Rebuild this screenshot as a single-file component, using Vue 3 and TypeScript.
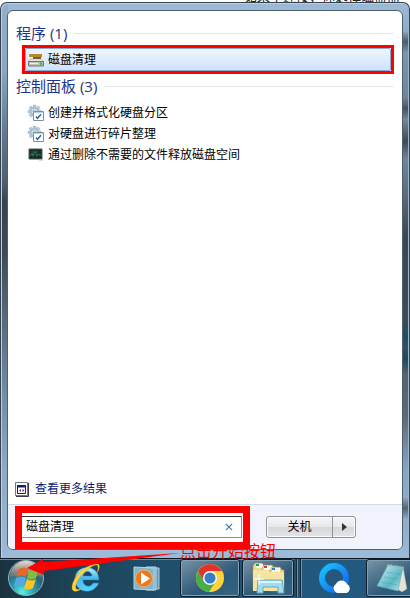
<script setup lang="ts">
import { ref } from 'vue'

type IconName = 'disk' | 'gear' | 'defrag'
interface Result { label: string; icon: IconName; selected?: boolean }
interface Group { title: string; results: Result[] }

const query = ref('磁盘清理')
const groups: Group[] = [
  { title: '程序', results: [{ label: '磁盘清理', icon: 'disk', selected: true }] },
  {
    title: '控制面板',
    results: [
      { label: '创建并格式化硬盘分区', icon: 'gear' },
      { label: '对硬盘进行碎片整理', icon: 'gear' },
      { label: '通过删除不需要的文件释放磁盘空间', icon: 'defrag' },
    ],
  },
]
const teeth = [0, 45, 90, 135, 180, 225, 270, 315]
</script>

<template>
  <main class="desktop">
    <p class="behind">如果不连接，你选择磁盘器</p>
    <section class="start-menu">
      <div class="panel">
        <div class="results">
          <section v-for="group in groups" :key="group.title" class="group">
            <h2>{{ group.title }} ({{ group.results.length }})</h2>
            <ul>
              <li v-for="item in group.results" :key="item.label">
                <button class="result" :class="{ selected: item.selected }" type="button">
                  <svg v-if="item.icon === 'disk'" class="icon" viewBox="0 0 16 16" aria-hidden="true">
                    <path d="M1 2h13v3H1z" fill="#c39a2c" />
                    <path d="M3 2v3M5 2v3M7 2v3M9 2v3M11 2v3M13 2v3" stroke="#8a6a1c" stroke-width=".6" />
                    <path d="M5 5h8v2H5z" fill="#6d5a2a" />
                    <path d="M2 7h11l3 3H0z" fill="#e6e6de" stroke="#a5a59c" stroke-width=".5" />
                    <path d="M.5 9.500h15v4.500H.5z" fill="#c0c0b8" stroke="#75756f" />
                    <path d="M2 11.500h8" stroke="#f0f0ea" />
                    <path d="M12 10.500h2v3h-2z" fill="#32cb38" />
                  </svg>
                  <svg v-else-if="item.icon === 'gear'" class="icon" viewBox="0 0 16 16" aria-hidden="true">
                    <g fill="#b4c8d8" stroke="#8ba6bc" stroke-width=".3">
                      <rect v-for="angle in teeth" :key="angle" x="5" y="0" width="3" height="4" :transform="`rotate(${angle} 6.500 6.500)`" />
                    </g>
                    <circle cx="6.500" cy="6.500" r="3.800" fill="#dce8f2" stroke="#a8bfd1" stroke-width="2" />
                    <circle cx="6.500" cy="6.500" r="1.500" fill="#fff" stroke="#7795ae" stroke-width=".7" />
                    <path d="M5.500 6.500h10v9h-10z" fill="#fff" stroke="#7d929f" />
                    <path d="M6 7.500h9" stroke="#c3ced6" />
                    <path d="M8 11.500l1.500 1.800 3.500-4" fill="none" stroke="#1768ad" stroke-width="1.400" />
                  </svg>
                  <svg v-else class="icon" viewBox="0 0 16 16" aria-hidden="true">
                    <path d="M1 2h13v10H1z" fill="#142a26" stroke="#4c5653" />
                    <path d="M2 5h11M2 8h11M5 3v8M9 3v8" stroke="#315448" stroke-width=".5" />
                    <path d="M2 9l2-3 1 3 2-5 2 5 2-2 2 2" fill="none" stroke="#267946" />
                    <path d="M11 13h4" stroke="#bbb" />
                  </svg>
                  <span>{{ item.label }}</span>
                </button>
              </li>
            </ul>
          </section>
          <a class="more" href="#results">
            <svg class="more-icon" viewBox="0 0 15 15" aria-hidden="true">
              <path d="M.5.5h12v13H.5z" fill="#fff" stroke="#77776e" />
              <path d="M13.500 1v13.500H1" fill="none" stroke="#3c3c38" />
              <path d="M2.500 3.500h8v8h-8z" fill="#fff" stroke="#101e78" />
              <path d="M2 4.500h9" stroke="#101e78" stroke-width="2" />
              <path d="M6 7L4 8.500 6 10z" fill="#c71818" />
              <path d="M7.500 7l2 1.500-2 1.500z" fill="#1733b9" />
            </svg>
            <span>查看更多结果</span>
          </a>
        </div>
        <form class="footer" @submit.prevent>
          <div class="search-frame">
            <div class="search">
              <input v-model="query" type="text" aria-label="搜索" />
              <button type="button" aria-label="清除" @click="query = ''">
                <svg viewBox="0 0 9 9"><path d="M1 1l7 7M8 1L1 8" stroke="#427fb4" stroke-width="1.400" /></svg>
              </button>
            </div>
          </div>
          <div class="power">
            <button class="shutdown" type="button">关机</button>
            <button class="options" type="button" aria-label="关机选项">
              <svg viewBox="0 0 5 8"><path d="M0 0l5 4-5 4z" fill="#333" /></svg>
            </button>
          </div>
        </form>
      </div>
    </section>

    <nav class="taskbar" aria-label="任务栏">
      <button class="start" type="button" aria-label="开始">
        <svg viewBox="0 0 38 38">
          <defs>
            <radialGradient id="orb" cx=".4" cy=".9" r=".85"><stop stop-color="#5ff0e4" /><stop offset=".35" stop-color="#2ba3b4" /><stop offset=".7" stop-color="#2a647c" /><stop offset="1" stop-color="#6d6c6c" /></radialGradient>
            <linearGradient id="shine" x2="0" y2="1"><stop stop-color="#e9e5df" stop-opacity=".95" /><stop offset="1" stop-color="#c08872" stop-opacity=".35" /></linearGradient>
          </defs>
          <circle cx="19" cy="19" r="17.500" fill="url(#orb)" stroke="#8fb4bd" />
          <path d="M3 18a16 16 0 0132 0q-16-5-32 0z" fill="url(#shine)" />
          <path d="M12 10q5-3 9 0l-2 8q-5-3-10 0z" fill="#ee6425" />
          <path d="M22 11q5 3 10-1l-3 9q-5 3-9 0z" fill="#83bd3f" />
          <path d="M9 19q5-3 10 0l-3 9q-5-3-9 0z" fill="#53a9e3" />
          <path d="M20 20q5 3 9 0l-3 9q-5 3-9 0z" fill="#ffc326" />
        </svg>
      </button>
      <button class="task" type="button" aria-label="Internet Explorer">
        <svg class="task-icon" viewBox="0 0 32 32">
          <defs><linearGradient id="ie" x2="0" y2="1"><stop stop-color="#bdf1ff" /><stop offset=".45" stop-color="#43b9ef" /><stop offset="1" stop-color="#57d4ff" /></linearGradient></defs>
          <path d="M29 18H13c0 7 8 8 10 3h6C23 34 5 31 5 17 5 2 29 1 29 18zM13 14h9c-1-6-8-6-9 0z" fill="url(#ie)" fill-rule="evenodd" stroke="#187fb9" stroke-width=".5" />
          <path d="M27 11C33 1 27-1 17 5 4 12-1 27 4 29c3 1 6-1 8-3-7 4-8-1-4-8C14 8 28-1 28 5c0 2 0 3-1 6z" fill="#ffd23a" stroke="#d99d17" stroke-width=".4" />
        </svg>
      </button>
      <button class="task" type="button" aria-label="Windows Media Player">
        <svg class="task-icon" viewBox="0 0 32 32">
          <path d="M17 6h10v21H17z" fill="#629ab9" stroke="#acd1e1" />
          <path d="M14 5h10v23H14z" fill="#76a9c4" stroke="#b8d9e6" />
          <path d="M2 5l20 1v22L2 27z" fill="#81b5ce" stroke="#b5d7e5" />
          <circle cx="12" cy="16.500" r="8.500" fill="#ee781d" stroke="#f8ae6c" />
          <path d="M9 10.500l9 6-9 6z" fill="#fff" />
        </svg>
      </button>
      <button class="task open" type="button" aria-label="Google Chrome">
        <svg class="task-icon" viewBox="0 0 32 32">
          <circle cx="16" cy="16" r="14" fill="#ffd43a" />
          <path d="M3.900 9A14 14 0 0128.100 9H16a7 7 0 00-6 10z" fill="#df332b" />
          <path d="M3.900 9A14 14 0 0015 30l7-11a7 7 0 01-12 0z" fill="#48ad45" />
          <circle cx="16" cy="16" r="7" fill="#f4f6f6" /><circle cx="16" cy="16" r="5.500" fill="#387dcc" />
        </svg>
      </button>
      <div class="stack">
        <button class="task open" type="button" aria-label="Windows 资源管理器">
          <svg class="task-icon folder" viewBox="0 0 36 32">
            <path d="M3 4l2-3h7l2 3h3v24H3z" fill="#efd98c" stroke="#ab8b3d" stroke-width=".5" />
            <path d="M6 2h7v4H6z" fill="#f5f7ee" /><path d="M6 2h3v2H6z" fill="#20a33c" />
            <path d="M12 6l2-3h8l2 3h2v22H12z" fill="#efd583" stroke="#b99748" stroke-width=".5" />
            <path d="M14 4h8v4h-8z" fill="#f7f7f2" /><path d="M14 4h3v2h-3z" fill="#d8402b" />
            <path d="M20 8l2-3h8l2 3h2v21H20z" fill="#ecd17b" stroke="#b99748" stroke-width=".5" />
            <path d="M22 6h8v4h-8z" fill="#f5f7f7" /><path d="M22 6h3v2h-3z" fill="#198cc6" />
            <path d="M3 9h15l2 2h14v18H3z" fill="#f5e3a2" />
            <path d="M3 9h15l2 2h14" fill="none" stroke="#fff5cc" stroke-width=".7" />
            <path d="M8 18h24l2 13h-6v-6H13v6H7z" fill="#a4dbed" stroke="#5cabcb" />
            <path d="M9 20h22" stroke="#def5fa" stroke-width="2" />
            <path d="M9 12v11M4 17h10" stroke="#fff" />
          </svg>
        </button>
        <span class="edge"></span><span class="edge"></span>
      </div>
      <button class="task" type="button" aria-label="QQ浏览器">
        <svg class="task-icon" viewBox="0 0 32 32">
          <defs><linearGradient id="ring" y2="1"><stop stop-color="#16c3ff" /><stop offset="1" stop-color="#1761ec" /></linearGradient></defs>
          <circle cx="16" cy="16" r="12" fill="none" stroke="url(#ring)" stroke-width="6" />
          <path d="M19 31a5 5 0 01-1-9 6 6 0 0111 0 5 5 0 010 9z" fill="#fff" />
        </svg>
      </button>
      <button class="task open notepad" type="button" aria-label="记事本">
        <svg class="task-icon" viewBox="0 0 32 32">
          <defs><linearGradient id="note" x2="1" y2="1"><stop stop-color="#dff5f5" /><stop offset=".6" stop-color="#5ab7c4" /><stop offset="1" stop-color="#b4e6e8" /></linearGradient></defs>
          <path d="M27 4l4 23-5 3-7-4z" fill="#e5e2d6" stroke="#91968a" stroke-width=".5" />
          <path d="M12 3l15 2-5 24L1 24z" fill="url(#note)" stroke="#6ba4af" stroke-width=".5" />
          <path d="M12 2v3m3-3v3m3-2v3m3-3v3m3-2v3m3-2v2" stroke="#b2bbb6" />
          <path d="M10 10l14 2M8 15l14 2M5 20l16 3" stroke="#479ba8" stroke-width=".4" />
        </svg>
      </button>
    </nav>
    <div class="annotation">
      <svg viewBox="0 0 156 24" aria-hidden="true"><path d="M1 16l16-9v3L154 1 18 19v4z" fill="#f00" /></svg>
      <span>点击开始按钮</span>
    </div>
  </main>
</template>

<style>
body { margin: 0; background: #fff; }
</style>

<style scoped>
.desktop { position: relative; display: flex; flex-direction: column; min-height: 100vh; overflow: hidden; font: 12px/20px "Open Sans", "Noto Sans CJK SC", sans-serif; }
.desktop * { box-sizing: border-box; }
button, input { padding: 0; border: 0; background: none; color: inherit; font: inherit; }
svg { display: block; overflow: visible; }
.behind { position: absolute; top: -12px; right: 10px; margin: 0; color: #222; font-size: 13px; line-height: 16px; white-space: nowrap; }
.start-menu {
  position: relative; flex: 1; display: flex; margin-top: 2px; padding: 7px 6px 8px;
  border: 1px solid #34434f; border-bottom: 0; border-radius: 7px 7px 0 0;
  background:
    linear-gradient(#91aecb, #8aa7c2 12%, #5d7386 25%, #4f6170 32%, #34434f 36%, #3d4b57 45%, #546575 55%, #7590a9 72%, #8eabc8 85%, #9bbbd8) left / 7px 100% no-repeat,
    linear-gradient(#9dbad6, #8eabc7 5%, #4c5a66 7%, #7d96ad 9%, #6f8599 17%, #46535f 19%, #73899d 21%, #3e4952 25%, #6f859a 28%, #5b6f80 34%, #3c474f 42%, #404b53 57%, #1d4f63 60%, #35505e 62%, #1a4a5d 64%, #58636c 67%, #5c6770 74%, #88a5c0 84%, #8eabc7 89%, #56636e 91%, #8eabc7 93%, #9bbbd8) right / 7px 100% no-repeat,
    linear-gradient(#9bb8d4, #9bbbd8);
  box-shadow: inset 1px 1px #bdd0df, inset -1px 0 #9ab5c8;
}
.panel { flex: 1; display: flex; flex-direction: column; min-width: 0; overflow: hidden; border: 1px solid #4e6070; border-radius: 6px; background: #fff; }
.results { flex: 1; display: flex; flex-direction: column; padding: 12px 6px 5px 8px; }
h2 { display: flex; align-items: center; gap: 7px; margin: 0; color: #1e3287; font-size: 15px; font-weight: 400; line-height: 20px; }
h2::after { content: ""; flex: 1; height: 1px; margin-right: 3px; background: #e3e3e3; }
.group ul { margin: 0; padding: 6px 0 0 10px; list-style: none; }
.group:first-child ul { margin: 0 2px 0 6px; padding: 2px 0; }
.group:first-child li { border: 3px solid #f00; }
.result { display: flex; align-items: center; gap: 4px; width: 100%; height: 21px; padding-left: 2px; color: #000; text-align: left; white-space: nowrap; }
.result.selected { height: 23px; border: 1px solid #88aad3; border-radius: 2px; background: linear-gradient(#eff5fe, #cfe3fd); }
.icon { width: 16px; height: 16px; }
.more { display: flex; align-items: center; gap: 5px; margin-top: auto; color: #0a1c72; text-decoration: none; }
.more-icon { width: 15px; height: 15px; margin-left: -1px; }
.footer { display: flex; align-items: flex-start; justify-content: space-between; padding: 1px 46px 0 7px; border-top: 1px solid #cedcec; background: #f0f3fb; }
.search-frame { flex: 0 1 235px; padding: 3px 1px 4px 0; border: 7px solid #f00; background: #fff; }
.search { display: flex; height: 22px; border: 1px solid #8b9196; border-top-color: #333; border-left: 0; background: #fff; }
.search input { flex: 1; min-width: 0; padding-left: 4px; color: #000; outline: 0; }
.search button { display: grid; place-items: center; width: 24px; }
.search button svg { width: 8px; height: 8px; }
.power { display: flex; width: 90px; height: 22px; margin-top: 10px; border: 1px solid #929499; border-radius: 3px; background: linear-gradient(#f5f5f6, #e8e9eb 48%, #d5d6da 50%, #e4e5e8); box-shadow: inset 0 0 0 1px #fafafa; }
.shutdown { flex: 1; border-right: 1px solid #929499; }
.options { display: grid; place-items: center; width: 22px; }
.options svg { width: 5px; height: 8px; }
.taskbar { display: flex; gap: 2px; height: 40px; padding-bottom: 1px; border-top: 1px solid #0c1722; background: linear-gradient(90deg, #1b333f, #1d455b 20%, #20506f 45%, #23597e 80%, #23597e); box-shadow: inset 0 1px #6d8798; }
.start { display: grid; place-items: center; flex: 0 0 54px; padding: 0 2px 2px 0; }
.start svg { width: 38px; height: 38px; }
.task { display: grid; place-items: center; flex: 0 0 60px; min-width: 0; }
.task-icon { width: 32px; height: 32px; }
.open { border: 1px solid #101e29; border-radius: 3px; background: linear-gradient(150deg, #7795a8, #3f6682 45%, #2c5a7b 60%, #356583); box-shadow: inset 0 0 0 1px #83a1b5; }
.stack { display: flex; flex: 0 0 60px; }
.stack .task { flex-basis: 52px; }
.task-icon.folder { width: 36px; }
.edge { width: 4px; border-right: 1px solid #7391a4; background: #254b65; box-shadow: inset -1px 0 #152c3d; }
.notepad { justify-content: start; padding-left: 9px; }
.annotation { position: absolute; bottom: 22px; left: 26px; display: flex; align-items: flex-end; pointer-events: none; color: #f00; font-size: 16px; line-height: 24px; white-space: nowrap; }
.annotation svg { width: 156px; height: 24px; margin-right: -2px; }
.annotation span { margin-bottom: 13px; }
</style>
